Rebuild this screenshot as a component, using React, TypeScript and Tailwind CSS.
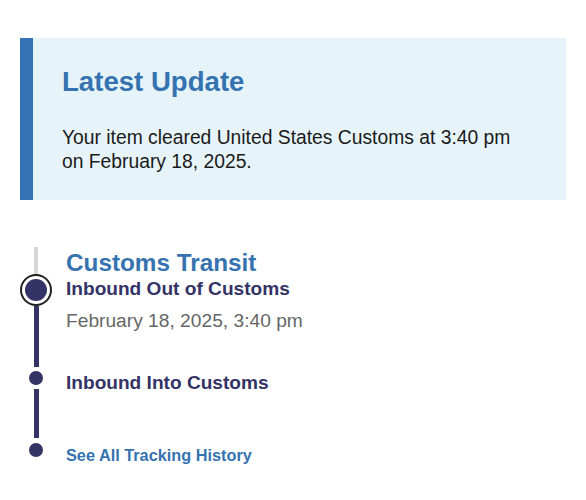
const NAVY = "bg-[#333366]";

export default function App() {
  return (
    <div
      className="min-h-screen bg-white pt-[38px]"
      style={{ fontFamily: '"Liberation Sans", Arial, sans-serif' }}
    >
      {/* Latest update banner */}
      <div className="mx-[20px] border-l-[13px] border-[#3471b5] bg-[#e6f4fa] pl-[29px] pr-4 pt-[28px] pb-[26px]">
        <h2 className="text-[27.6px] leading-[32px] font-bold text-[#3573b0]">
          Latest Update
        </h2>
        <p className="mt-[28px] text-[19.3px] leading-[24px] text-[#1a1a1a]">
          Your item cleared United States Customs at 3:40 pm
          <br />
          on February 18, 2025.
        </p>
      </div>

      {/* Tracking timeline */}
      <div className="mt-[47px] ml-[20px] flex gap-[14px]">
        <div className="flex w-[32px] flex-col items-center">
          <div className="h-[27px] w-[4px] bg-[#d6d6d6]" />
          <div className="h-[32px] w-[32px] rounded-full border-[2.5px] border-[#222222] bg-white p-[3px]">
            <div className={`h-full w-full rounded-full ${NAVY}`} />
          </div>
          <div className={`h-[61px] w-[5px] ${NAVY}`} />
          <div className={`mt-[4px] h-[14px] w-[14px] rounded-full ${NAVY}`} />
          <div className={`mt-[4px] h-[49px] w-[5px] ${NAVY}`} />
          <div className={`mt-[5px] h-[14px] w-[14px] rounded-full ${NAVY}`} />
        </div>

        <div className="flex flex-col">
          <h3 className="mt-[2px] text-[24.3px] leading-[28px] font-bold text-[#3573b0]">
            Customs Transit
          </h3>
          <p className="text-[19.1px] leading-[24px] font-bold text-[#333366]">
            Inbound Out of Customs
          </p>
          <p className="mt-[8px] text-[19.2px] leading-[24px] text-[#666666]">
            February 18, 2025, 3:40 pm
          </p>
          <p className="mt-[38px] text-[19.1px] leading-[24px] font-bold text-[#333366]">
            Inbound Into Customs
          </p>
          <a
            href="#"
            className="mt-[50px] text-[16.3px] leading-[20px] font-bold text-[#3573b0]"
          >
            See All Tracking History
          </a>
        </div>
      </div>
    </div>
  );
}
